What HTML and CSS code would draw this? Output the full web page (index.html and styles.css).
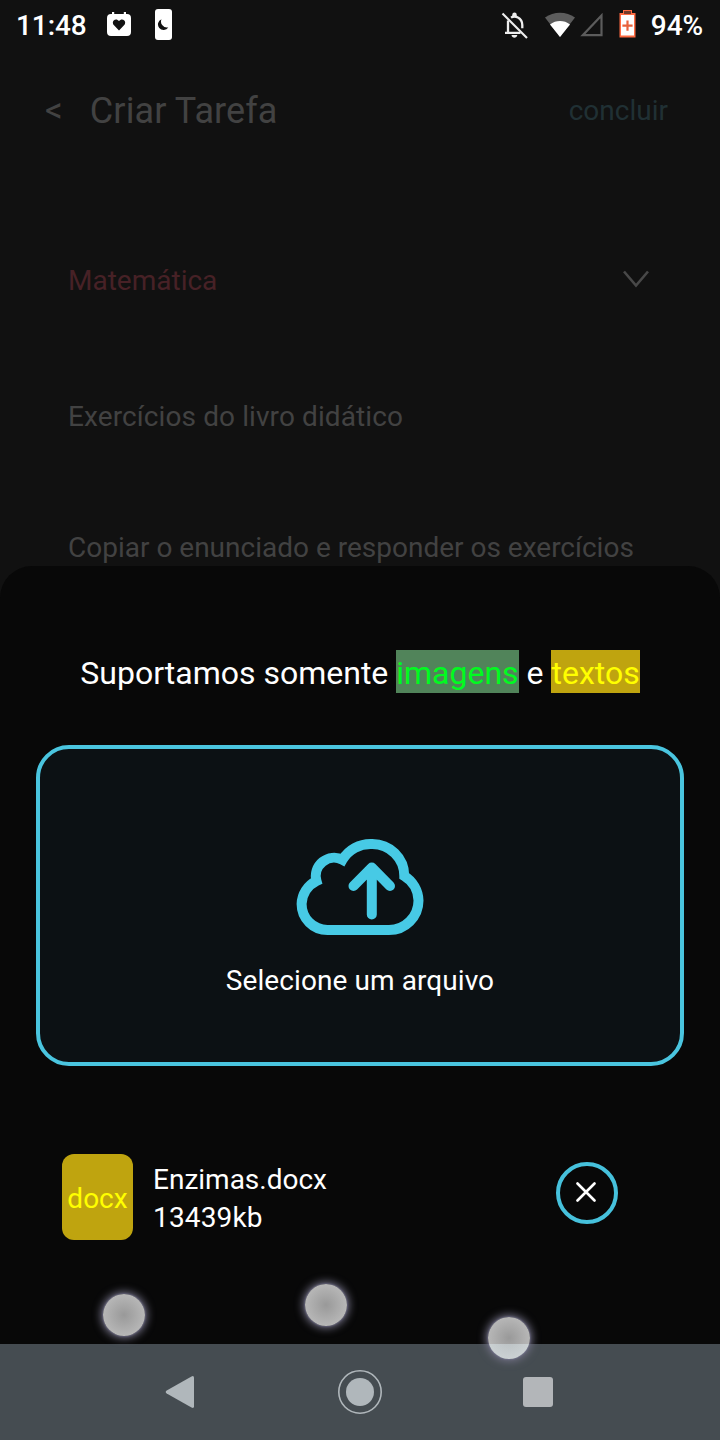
FILE: index.html
```
<!DOCTYPE html>
<html lang="pt-BR">
<head>
<meta charset="utf-8">
<title>Criar Tarefa</title>
<link rel="stylesheet" href="styles.css">
</head>
<body>
<div class="screen">
  <header class="status">
    <span class="clock">11:48</span>
    <svg class="calendar" width="24" height="25" viewBox="0 0 24 25"><path fill="#fff" fill-rule="evenodd" d="M5 0h2.200v2h9.600V0H19v2h1a4 4 0 0 1 4 4v14a4 4 0 0 1-4 4H4a4 4 0 0 1-4-4V6a4 4 0 0 1 4-4h1zM12 18.500l5-5.200c1.500-1.500 1.500-3.600.3-4.900-1.500-1.500-3.800-1.300-5.300.6-1.500-1.900-3.800-2.100-5.300-.6-1.200 1.300-1.200 3.400.3 4.900z"/></svg>
    <svg class="night" width="17" height="31" viewBox="0 0 17 31"><rect width="17" height="31" rx="3" fill="#fff"/><path fill="#111" d="M6.500 10.200a5.600 5.600 0 1 0 6.800 8.200 6 6 0 0 1-6.800-8.200z"/></svg>
    <span class="spacer"></span>
    <svg class="bell" width="28" height="28" viewBox="0 0 28 28" fill="none" stroke="#eee" stroke-width="2.300"><path d="M1.500 1.500l24.500 24.500" stroke-width="2.200"/><path d="M7 8.500v12.300M4 20.900h15.500M10 5.600c2-1.300 5-1.300 7 0 3 1.700 4.300 4 4.300 7.500v3.200"/><path fill="#eee" stroke="none" d="M11.300 5V2.600a2.200 2.200 0 0 1 4.400 0V5zM10.500 23h5.800c-.4 3.500-5.400 3.500-5.800 0z"/></svg>
    <svg class="wifi" width="32" height="26" viewBox="0 0 32 26"><path fill="#5c5c5c" d="M1 5.500C9.500-.8 22.500-.8 31 5.500L16 25z"/><path fill="#fff" d="M6 12.500c6-4.600 14-4.600 20 0L16 25z"/></svg>
    <svg class="signal" width="23" height="24" viewBox="0 0 23 24"><path fill="none" stroke="#5c5c5c" stroke-width="2.200" d="M21.500 2.500v19.700H2.800z"/></svg>
    <svg class="battery" width="17" height="29" viewBox="0 0 17 29"><path fill="#ff6b42" d="M4 1h9v3h3.500v24.500H.5V4H4z"/><path fill="#753b2a" d="M5 2h7v3H5z"/><path fill="#fff" d="M2 6h13v20.500H2z"/><path fill="#e8633d" d="M7.400 11.500h2.200v4h4v2.200h-4v4H7.400v-4h-4v-2.200h4z"/></svg>
    <span class="percent">94%</span>
  </header>
  <nav class="topbar"><span class="back">&lt;</span><h1 class="title">Criar Tarefa</h1><span class="done">concluir</span></nav>
  <main class="form">
    <div class="field subject"><span class="subject-name">Matemática</span><svg class="chevron" width="26" height="18" viewBox="0 0 26 18"><path fill="none" stroke="#484848" stroke-width="2.600" d="M1 1.500l12 14 12-14"/></svg></div>
    <div class="field name"><span class="name-text">Exercícios do livro didático</span></div>
    <div class="field details"><span class="details-text">Copiar o enunciado e responder os exercícios</span></div>
  </main>
  <section class="sheet">
    <p class="support">Suportamos somente <mark class="images">imagens</mark> e <mark class="texts">textos</mark></p>
    <div class="drop">
      <svg class="cloud" width="128" height="98" viewBox="0 0 128 98" fill="none" stroke="#47cae5" stroke-width="10"><path d="M31.500 92H93A29.500 29.500 0 0 0 122.500 62.500A29.500 29.500 0 0 0 108.300 38A32 32 0 0 0 75.700 6A32.500 32.500 0 0 0 46.500 21.800A18.300 18.300 0 0 0 20.500 43A26.200 26.200 0 0 0 5.600 66A26 26 0 0 0 31.500 92z"/><path stroke-linecap="round" stroke-linejoin="round" d="M75.800 76.500V29.500M57.500 48l18.300-18.500L94 48"/></svg>
      <span class="drop-label">Selecione um arquivo</span>
    </div>
    <div class="file">
      <span class="badge"><span class="badge-text">docx</span></span>
      <div class="meta"><span class="filename">Enzimas.docx</span><span class="filesize">13439kb</span></div>
      <span class="remove"><svg class="cross" width="20" height="20" viewBox="0 0 20 20"><path fill="none" stroke="#fff" stroke-width="2.600" stroke-linecap="round" d="M1.500 1.500l17 17M18.500 1.500l-17 17"/></svg></span>
    </div>
  </section>
  <i class="touch t1"></i><i class="touch t2"></i><i class="touch t3"></i>
  <footer class="navbar">
    <svg class="nav-back" width="30" height="34" viewBox="0 0 30 34"><path fill="#b0b7bb" d="M1.700 15.500L26.500 1.500Q29 .3 29 2.800v28.400Q29 33.700 26.500 32.500L1.700 18.500Q-.3 17 1.700 15.500z"/></svg>
    <svg class="nav-home" width="44" height="44" viewBox="0 0 44 44"><circle cx="22" cy="22" r="21.200" fill="none" stroke="#b0b7bb" stroke-width="1.600"/><circle cx="22" cy="22" r="14" fill="#b0b7bb"/></svg>
    <span class="nav-recent"></span>
  </footer>
</div>
</body>
</html>
```
FILE: styles.css
```
* { box-sizing: border-box; }
body { margin: 0; background: #111; font-family: Roboto, sans-serif; }
.screen { position: relative; width: 720px; height: 1440px; overflow: hidden; display: flex; flex-direction: column; background: #111; color: #fff; }
.screen span, .title, .support { white-space: nowrap; }
.status { height: 50px; display: flex; align-items: center; padding: 0 17px 0 16px; flex: none; font-size: 28px; font-weight: 500; }
.clock { letter-spacing: -.1px; }
.calendar { margin-left: 20px; margin-top: -1px; }
.night { margin-left: 24px; margin-top: -2px; }
.spacer { flex: 1; }
.bell { margin-top: 1px; }
.wifi { margin-left: 15px; margin-top: -1px; }
.signal { margin-left: 4px; }
.battery { margin-left: 16px; margin-top: -3px; }
.percent { margin-left: 15px; letter-spacing: -.1px; }
.topbar { height: 120px; flex: none; display: flex; align-items: center; padding: 1px 52px 0 45px; color: #424242; }
.back { font-size: 35px; }
.title { margin: 1px 0 0 27px; font-size: 36px; font-weight: 400; letter-spacing: .1px; }
.done { margin-left: auto; color: #203034; font-size: 28px; }
.form { height: 396px; flex: none; padding: 61px 71px 0 68px; font-size: 28px; color: #424242; }
.field { display: flex; align-items: center; justify-content: space-between; }
.subject { height: 98px; color: #472126; }
.chevron { margin-top: -2px; }
.name { height: 174px; letter-spacing: .1px; }
.details { height: 88px; }
.sheet { height: 778px; flex: none; border-radius: 32px 32px 0 0; background: #080808; padding: 84px 36px 0; }
.support { margin: 0; height: 43px; line-height: 46px; font-size: 32px; text-align: center; }
.images, .texts { display: inline-block; height: 43px; vertical-align: top; }
.images { color: #00fb20; background: #51845a; }
.texts { color: #ff0; background: #bfa40f; }
.drop { height: 321px; margin-top: 52px; border: 4px solid #4ac5df; border-radius: 33px; background: #0c1114; display: flex; flex-direction: column; align-items: center; padding-top: 89px; }
.drop-label { margin-top: 26px; font-size: 28px; line-height: 38px; letter-spacing: .08px; }
.file { display: flex; align-items: center; margin-top: 88px; padding: 0 66px 0 26px; }
.badge { width: 71px; height: 86px; padding-top: 2px; border-radius: 12px; background: #bfa40f; color: #ff0; display: flex; align-items: center; justify-content: center; font-size: 28px; }
.meta { margin: 4px 0 0 20px; display: flex; flex-direction: column; font-size: 28px; line-height: 38px; }
.filesize { letter-spacing: .15px; }
.remove { margin-left: auto; margin-top: -9px; width: 62px; height: 62px; border: 4px solid #46c1dc; border-radius: 50%; display: flex; align-items: center; justify-content: center; }
.cross { margin: -2px 2px 0 0; }
.touch { position: absolute; width: 42px; height: 42px; border-radius: 50%; background: radial-gradient(circle, #999 0%, #b9b9b9 75%, #c5c5c8 100%); box-shadow: 0 0 2px 0 #8583ac, 0 0 9px 2px #77758b; }
.t1 { left: 103px; top: 1294px; }
.t2 { left: 305px; top: 1284px; }
.t3 { left: 488px; top: 1317px; background: linear-gradient(transparent 27px, rgba(230, 245, 250, .42) 27px), radial-gradient(circle, #999 0%, #b9b9b9 75%, #c5c5c8 100%); }
.navbar { height: 96px; flex: none; background: #454c51; display: flex; align-items: center; padding: 0 167px 0 165px; }
.nav-home { margin-left: 143px; }
.nav-recent { margin-left: auto; width: 30px; height: 30px; border-radius: 3px; background: #b3b6b9; }
```
